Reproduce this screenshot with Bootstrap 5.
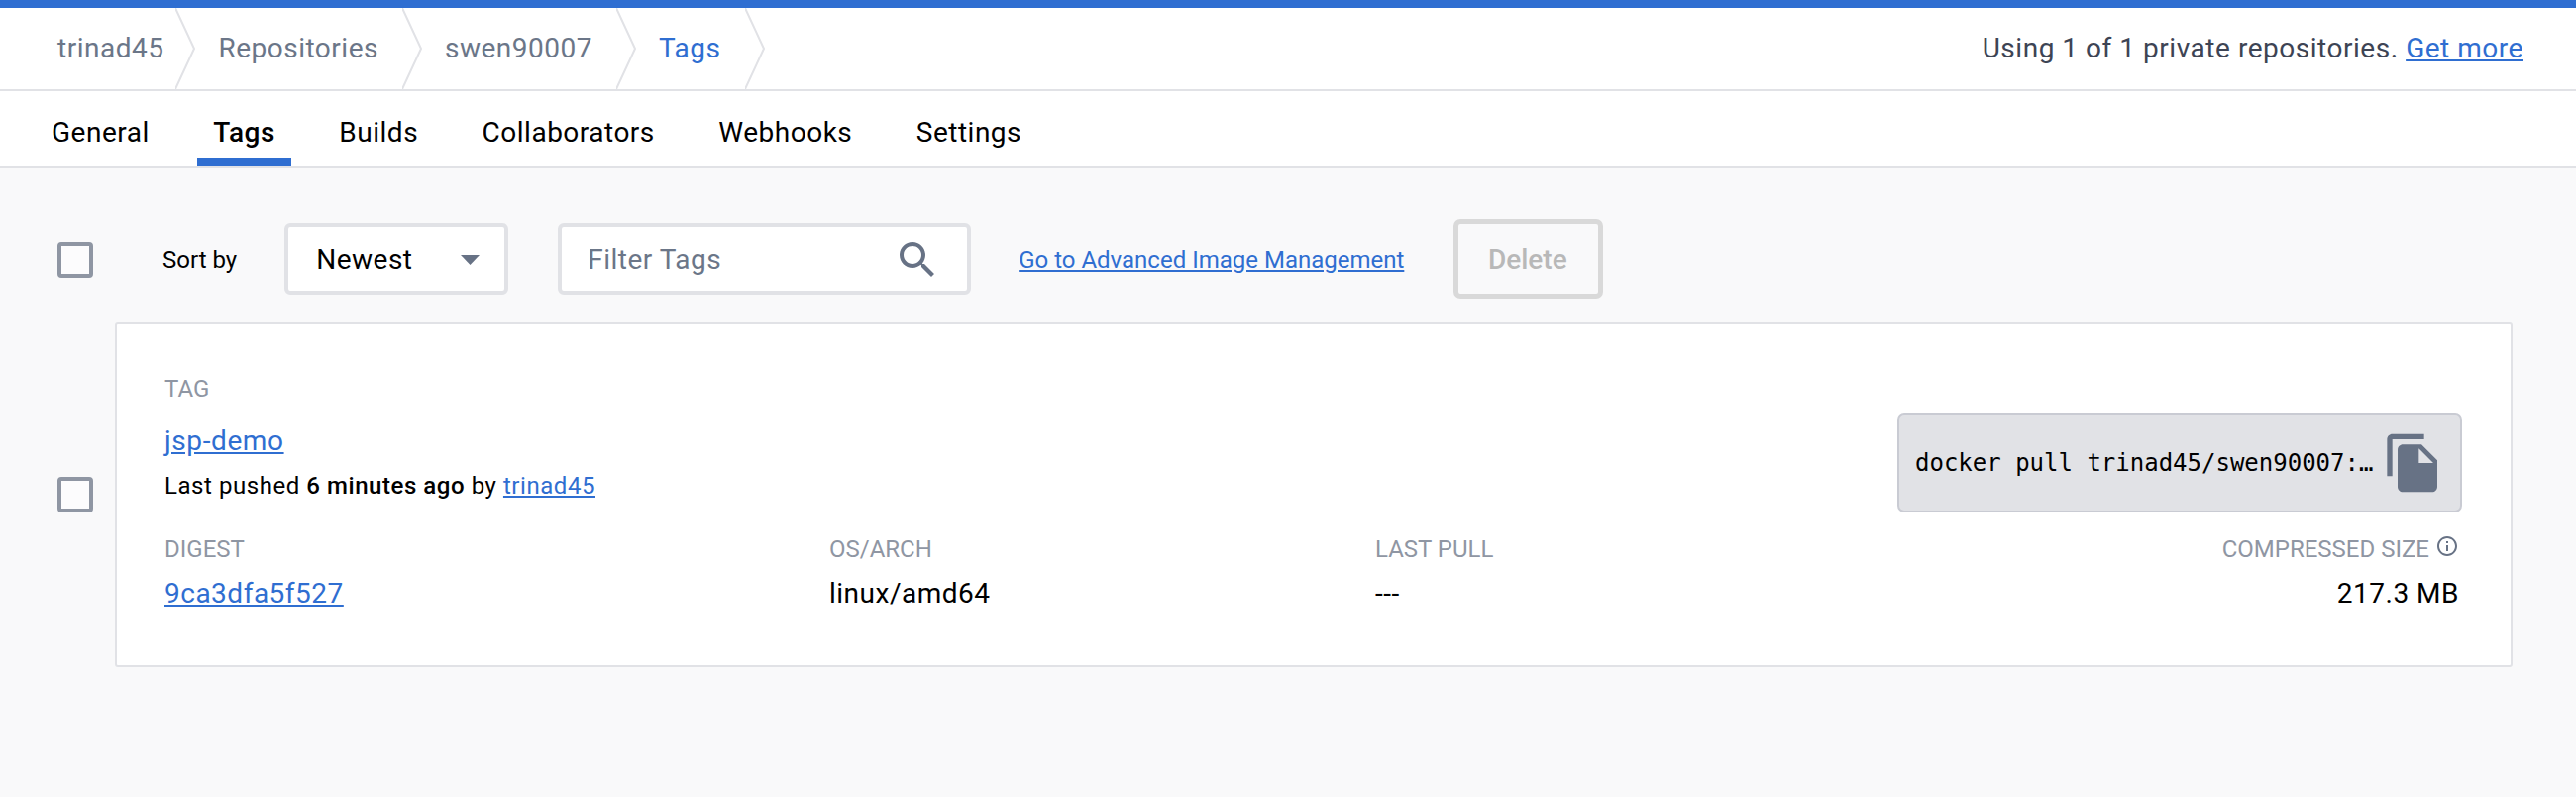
<!DOCTYPE html>
<html lang="en">
<head>
  <meta charset="UTF-8" />
  <title>Tags</title>
  <link href="https://cdn.jsdelivr.net/npm/bootstrap@5.3.0/dist/css/bootstrap.min.css" rel="stylesheet">
  <style>
    body { font-family: Roboto, "Liberation Sans", sans-serif; background: #f9f9fa; color: #000; height: 804px; overflow: hidden; }
    a { color: #2f6ed1; }

    .top-stripe { height: 8px; background: #2f6ed1; }
    .crumb-bar { height: 84px; background: #fff; border-bottom: 2px solid #e1e2e6; }
    .crumb-item { font-size: 28px; letter-spacing: .5px; color: #6b7688; text-decoration: none; padding: 0 24px 0 23px; }
    .crumb-item.first { padding-left: 58px; padding-right: 12px; }
    .crumb-item.here { color: #2f6ed1; }
    .crumb-sep { width: 20px; height: 82px; flex: none; }
    .usage { font-size: 28px; letter-spacing: .53px; color: #3d4454; padding-right: 53px; }

    .tab-bar { height: 77px; background: #fff; border-bottom: 2px solid #e1e2e6; padding-left: 36px; gap: 32.5px; }
    .tab-bar .nav-link { height: 75px; padding: 25px 16px 0; font-size: 28px; line-height: 34px; letter-spacing: .5px; color: #000; border-bottom: 8px solid transparent; }
    .tab-bar .nav-link.active { font-weight: 500; border-bottom-color: #2f6ed1; }

    .tool-row { height: 81px; margin: 52px 0 23px; padding-left: 58px; gap: 50px; }
    .tick { width: 36px; height: 36px; margin: 0; flex: none; border: 4px solid #8f96a3; border-radius: 4px; background-color: #fcfcfd; }
    .sort-by { font-size: 24px; margin-left: 20px; margin-right: -2px; }
    .sort-select { width: 226px; height: 73px; font-size: 28px; letter-spacing: .5px; color: #000; padding: 0 40px 0 28px; border: 4px solid #e1e2e6; border-radius: 6px;
      background-image: url("data:image/svg+xml,%3Csvg xmlns='http://www.w3.org/2000/svg' viewBox='0 0 19 10'%3E%3Cpath fill='%23677285' d='M0 0h19l-9.500 10z'/%3E%3C/svg%3E");
      background-size: 19px 10px; background-position: right 25px center; }
    .filter-box { width: 417px; height: 73px; background: #fff; border: 4px solid #e1e2e6; border-radius: 6px; padding-right: 26px; }
    .filter-box .form-control { font-size: 28px; letter-spacing: .5px; padding: 0 0 0 26px; border: 0; background: transparent; box-shadow: none; }
    .filter-box .form-control::placeholder { color: #6b7688; }
    .adv-link { font-size: 24px; white-space: nowrap; margin-left: -2px; }
    .del-btn { width: 151px; height: 81px; padding: 0 2px 0 0; font-size: 28px; font-weight: 500; color: #b8b8b8; background: transparent; border: 5px solid #d9d9d9; border-radius: 7px; }
    .del-btn:disabled { color: #b8b8b8; border-color: #d9d9d9; opacity: 1; }

    .tag-row { padding-left: 58px; padding-right: 64px; gap: 22px; }
    .tag-panel { height: 348px; border: 2px solid #e1e2e6; border-radius: 3px; padding: 47px 49px 0 48px; }
    .head-block { height: 143px; }
    .col-label { font-size: 24px; line-height: 36px; color: #8f96a3; }
    .tag-name { display: block; font-size: 28px; line-height: 36px; letter-spacing: .6px; margin-top: 17px; }
    .push-line { font-size: 24px; line-height: 36px; letter-spacing: .55px; margin-top: 9px; }
    .pull-box { width: 570px; height: 100px; background: #e1e2e6; border: 2px solid #c9cbd3; border-radius: 7px; padding-left: 16px; }
    .pull-cmd { width: 464px; white-space: nowrap; font-family: "DejaVu Sans Mono", "Liberation Mono", monospace; font-size: 24px; }
    .copy-icon { width: 64px; height: 64px; flex: none; margin-left: 7px; fill: #677285; }
    .info-grid { display: grid; grid-template-columns: 671px 551px 1fr auto; margin-top: 19px; }
    .cell-value { font-size: 28px; line-height: 36px; letter-spacing: .5px; margin-top: 9px; }
    .size-cell { text-align: right; padding-right: 5px; }
    .size-cell .cell-value { margin-right: -2px; }
    .info-icon { width: 24px; height: 24px; margin: 3px -2px 0 6px; fill: #677285; }
  </style>
</head>
<body>
  <div class="top-stripe"></div>

  <!-- breadcrumb -->
  <div class="crumb-bar d-flex justify-content-between align-items-center">
    <div class="d-flex align-items-center">
      <a class="crumb-item first" href="#">trinad45</a>
      <svg class="crumb-sep" viewBox="0 0 20 82"><path d="M0 0L19 41L0 82" fill="none" stroke="#e1e2e6" stroke-width="2"/></svg>
      <a class="crumb-item" href="#">Repositories</a>
      <svg class="crumb-sep" viewBox="0 0 20 82"><path d="M0 0L19 41L0 82" fill="none" stroke="#e1e2e6" stroke-width="2"/></svg>
      <a class="crumb-item" href="#">swen90007</a>
      <svg class="crumb-sep" viewBox="0 0 20 82"><path d="M0 0L19 41L0 82" fill="none" stroke="#e1e2e6" stroke-width="2"/></svg>
      <a class="crumb-item here" href="#">Tags</a>
      <svg class="crumb-sep" viewBox="0 0 20 82"><path d="M0 0L19 41L0 82" fill="none" stroke="#e1e2e6" stroke-width="2"/></svg>
    </div>
    <div class="usage">Using 1 of 1 private repositories. <a href="#">Get more</a></div>
  </div>

  <!-- tabs -->
  <nav class="nav tab-bar">
    <a class="nav-link" href="#">General</a>
    <a class="nav-link active" href="#">Tags</a>
    <a class="nav-link" href="#">Builds</a>
    <a class="nav-link" href="#">Collaborators</a>
    <a class="nav-link" href="#">Webhooks</a>
    <a class="nav-link" href="#">Settings</a>
  </nav>

  <!-- toolbar -->
  <div class="tool-row d-flex align-items-center">
    <input class="form-check-input tick" type="checkbox">
    <span class="sort-by">Sort by</span>
    <select class="form-select sort-select"><option>Newest</option></select>
    <div class="filter-box d-flex align-items-center">
      <input class="form-control" type="text" placeholder="Filter Tags">
      <svg width="48" height="48" viewBox="0 0 24 24" fill="#677285" class="flex-shrink-0"><path d="M15.5 14h-.79l-.28-.27C15.41 12.59 16 11.11 16 9.5 16 5.91 13.09 3 9.5 3S3 5.910 3 9.500 5.910 16 9.500 16c1.610 0 3.090-.59 4.230-1.570l.27.28v.79l5 4.990L20.490 19l-4.990-5zm-6 0C7.010 14 5 11.990 5 9.500S7.010 5 9.500 5 14 7.010 14 9.500 11.990 14 9.500 14z"/></svg>
    </div>
    <a class="adv-link" href="#">Go to Advanced Image Management</a>
    <button class="btn del-btn" disabled>Delete</button>
  </div>

  <!-- tag row -->
  <div class="tag-row d-flex align-items-center">
    <input class="form-check-input tick" type="checkbox">
    <div class="tag-panel bg-white flex-grow-1">
      <div class="head-block d-flex justify-content-between align-items-end">
        <div class="align-self-start">
          <div class="col-label">TAG</div>
          <a class="tag-name" href="#">jsp-demo</a>
          <div class="push-line">Last pushed <span class="fw-medium">6 minutes ago</span> by <a href="#">trinad45</a></div>
        </div>
        <div class="pull-box d-flex align-items-center">
          <div class="pull-cmd">docker pull trinad45/swen90007:…</div>
          <svg class="copy-icon" viewBox="0 0 24 24"><path d="M16 1H4c-1.100 0-2 .9-2 2v14h2V3h12V1zm-1 4l6 6v10c0 1.100-.9 2-2 2H7.990C6.890 23 6 22.100 6 21l.01-14c0-1.100.89-2 1.990-2h7zm-1 7h5.500L14 6.500V12z"/></svg>
        </div>
      </div>
      <div class="info-grid">
        <div>
          <div class="col-label">DIGEST</div>
          <div class="cell-value"><a href="#">9ca3dfa5f527</a></div>
        </div>
        <div>
          <div class="col-label">OS/ARCH</div>
          <div class="cell-value">linux/amd64</div>
        </div>
        <div>
          <div class="col-label">LAST PULL</div>
          <div class="cell-value">---</div>
        </div>
        <div class="size-cell">
          <div class="col-label d-flex justify-content-end align-items-start">COMPRESSED SIZE<svg class="info-icon" viewBox="0 0 24 24"><path d="M11 7h2v2h-2zm0 4h2v6h-2zm1-9C6.480 2 2 6.480 2 12s4.480 10 10 10 10-4.480 10-10S17.520 2 12 2zm0 18c-4.410 0-8-3.590-8-8s3.590-8 8-8 8 3.590 8 8-3.590 8-8 8z"/></svg></div>
          <div class="cell-value">217.3 MB</div>
        </div>
      </div>
    </div>
  </div>

  <script src="https://cdn.jsdelivr.net/npm/bootstrap@5.3.0/dist/js/bootstrap.bundle.min.js"></script>
</body>
</html>
